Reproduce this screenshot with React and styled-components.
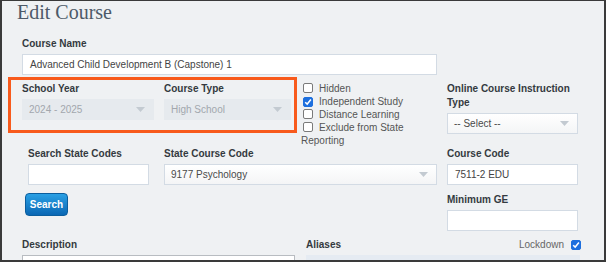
import React from 'react';
import styled, { createGlobalStyle } from 'styled-components';

const Global = createGlobalStyle`
  html, body { margin: 0; padding: 0; background: #ffffff; }
  body { font-family: "Liberation Sans", Arial, sans-serif; }
  * { box-sizing: border-box; }
`;

const Frame = styled.div`
  position: relative;
  width: 606px;
  height: 262px;
  overflow: hidden;
  background: #eff1f3;
  border-style: solid;
  border-color: #3a3a3a;
  border-width: 1px 2px 2px 2px;
`;

const Title = styled.h1`
  margin: 0;
  padding-left: 15px;
  font-family: "Liberation Serif", "DejaVu Serif", serif;
  font-weight: 400;
  font-size: 20px;
  line-height: 22px;
  color: #4d5a68;
`;

const Row = styled.div`
  display: grid;
  grid-template-columns: 132px 127px 136px 131px;
  column-gap: 10px;
  padding-left: 20px;
  margin-top: ${p => p.$mt || 0}px;
  align-items: start;
`;

const BottomRow = styled.div`
  display: grid;
  grid-template-columns: 273px 274px;
  column-gap: 11px;
  padding-left: 20px;
  margin-top: ${p => p.$mt || 0}px;
`;

const Field = styled.div`
  display: flex;
  flex-direction: column;
  grid-column: ${p => p.$span || 'auto'};
  padding-left: ${p => p.$pl || 0}px;
  margin-top: ${p => p.$mt || 0}px;
`;

const Label = styled.label`
  display: block;
  font-weight: 700;
  font-size: 10px;
  line-height: 14px;
  color: #343a40;
  margin-bottom: 3px;
`;

const TextInput = styled.div`
  height: 21px;
  width: ${p => (p.$w ? `${p.$w}px` : '100%')};
  background: #ffffff;
  border: 1px solid #d3dbe4;
  padding: 0 7px;
  font-size: 10px;
  line-height: 19px;
  color: #444;
  white-space: nowrap;
  overflow: hidden;
`;

const Select = styled.div`
  height: 21px;
  display: flex;
  align-items: center;
  justify-content: space-between;
  padding: 0 8px 0 6px;
  font-size: 10px;
  color: ${p => (p.$disabled ? '#a2a7ad' : '#4a4a4a')};
  background: ${p => (p.$disabled ? '#e6eaee' : 'linear-gradient(#ffffff, #f4f5f6)')};
  border: 1px solid ${p => (p.$disabled ? '#e6eaee' : '#d3dbe4')};
  white-space: nowrap;
`;

const Caret = () => (
  <svg width="9" height="5" viewBox="0 0 9 5">
    <path d="M0 0 L9 0 L4.5 5 Z" fill="#c3cad1" />
  </svg>
);

const CheckList = styled.div`
  font-size: 10px;
  line-height: 13px;
  color: #555;
`;

const CheckItem = styled.div`
  display: block;
`;

const Box = styled.span`
  display: inline-flex;
  align-items: center;
  justify-content: center;
  width: 10px;
  height: 10px;
  margin: 0 6px 0 2px;
  vertical-align: -1px;
  border-radius: 2px;
  border: 1px solid ${p => (p.$checked ? '#1d6fde' : '#7a7a7a')};
  background: ${p => (p.$checked ? '#1d6fde' : '#ffffff')};
`;

const Check = ({ checked }) => (
  <Box $checked={checked}>
    {checked && (
      <svg width="8" height="8" viewBox="0 0 8 8">
        <path d="M1.2 4.2 L3.2 6.1 L6.9 1.6" stroke="#fff" strokeWidth="1.5" fill="none" />
      </svg>
    )}
  </Box>
);

const Button = styled.button`
  width: 43px;
  height: 23px;
  margin: 8px 0 0 -3px;
  padding: 0;
  border: 1px solid #0b5e9e;
  border-radius: 4px;
  background: linear-gradient(#2aa0e4, #0a67b4);
  color: #fff;
  font-family: "Liberation Sans", Arial, sans-serif;
  font-weight: 700;
  font-size: 10px;
`;

const AliasHeader = styled.div`
  display: flex;
  justify-content: space-between;
  align-items: flex-start;
`;

const Lockdown = styled.span`
  display: flex;
  align-items: center;
  font-size: 10px;
  line-height: 14px;
  color: #666;
  margin-right: -1px;
`;

const TextArea = styled.div`
  height: 40px;
  background: #fff;
  border: 1px solid #b8bcc1;
  padding: 2px 4px;
  font-size: 10px;
  line-height: 13px;
  color: #333;
  overflow: hidden;
`;

const AliasBox = styled.div`
  height: 40px;
  background: #e5ebf2;
`;

const Highlight = styled.div`
  position: absolute;
  left: 6px;
  top: 76px;
  width: 289px;
  height: 56px;
  border: 3px solid #f85a1c;
  pointer-events: none;
`;

export default function App() {
  return (
    <>
      <Global />
      <Frame>
        <Title>Edit Course</Title>

        <Row $mt={14}>
          <Field $span="1 / 4">
            <Label>Course Name</Label>
            <TextInput>Advanced Child Development B (Capstone) 1</TextInput>
          </Field>
        </Row>

        <Row $mt={7}>
          <Field>
            <Label>School Year</Label>
            <Select $disabled>
              <span>2024 - 2025</span>
              <Caret />
            </Select>
          </Field>
          <Field>
            <Label>Course Type</Label>
            <Select $disabled>
              <span>High School</span>
              <Caret />
            </Select>
          </Field>
          <CheckList>
            <CheckItem><Check />Hidden</CheckItem>
            <CheckItem><Check checked />Independent Study</CheckItem>
            <CheckItem><Check />Distance Learning</CheckItem>
            <CheckItem><Check />Exclude from State Reporting</CheckItem>
          </CheckList>
          <Field>
            <Label>Online Course Instruction Type</Label>
            <Select>
              <span>-- Select --</span>
              <Caret />
            </Select>
          </Field>
        </Row>

        <Row>
          <Field $pl={6}>
            <Label>Search State Codes</Label>
            <TextInput $w={121} />
            <Button>Search</Button>
          </Field>
          <Field $span="2 / 4">
            <Label>State Course Code</Label>
            <Select>
              <span>9177 Psychology</span>
              <Caret />
            </Select>
          </Field>
          <div>
            <Field>
              <Label>Course Code</Label>
              <TextInput>7511-2 EDU</TextInput>
            </Field>
            <Field $mt={8}>
              <Label>Minimum GE</Label>
              <TextInput />
            </Field>
          </div>
        </Row>

        <BottomRow $mt={7}>
          <Field>
            <Label>Description</Label>
            <TextArea>
              Understand concepts in all aspects of early childhood development and education.
            </TextArea>
          </Field>
          <Field>
            <AliasHeader>
              <Label>Aliases</Label>
              <Lockdown>
                Lockdown
                <Box $checked style={{ margin: '0 0 0 7px' }}>
                  <svg width="8" height="8" viewBox="0 0 8 8">
                    <path d="M1.2 4.2 L3.2 6.1 L6.9 1.6" stroke="#fff" strokeWidth="1.5" fill="none" />
                  </svg>
                </Box>
              </Lockdown>
            </AliasHeader>
            <AliasBox />
          </Field>
        </BottomRow>

        <Highlight />
      </Frame>
    </>
  );
}
